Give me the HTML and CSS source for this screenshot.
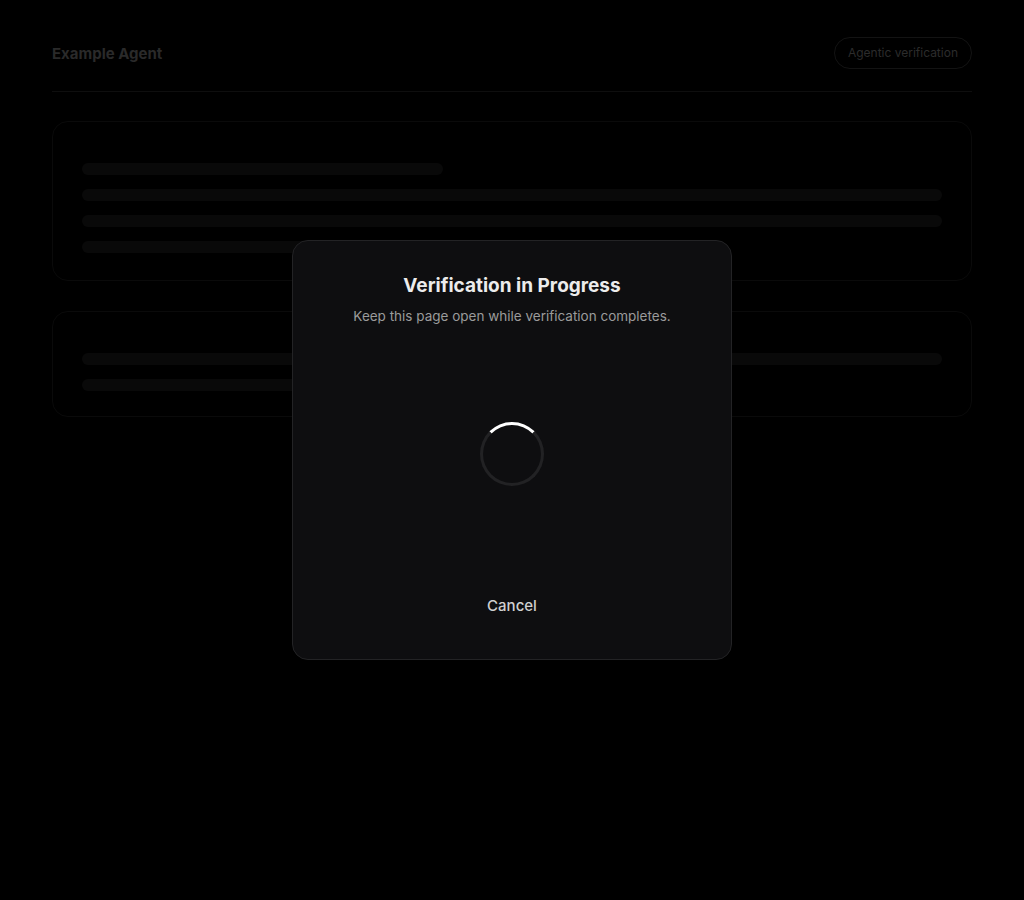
FILE: index.html
```html
<!DOCTYPE html>
<html lang="en">
<head>
    <meta charset="UTF-8">
    <meta name="viewport" content="width=device-width, initial-scale=1.0">
    <title>Example Agent</title>
    <link rel="stylesheet" href="styles.css">
</head>
<body>
    <div class="page">
        <header class="header">
            <h1 class="agent-name">Example Agent</h1>
            <span class="pill">Agentic verification</span>
        </header>

        <section class="card">
            <div class="skeleton w-40"></div>
            <div class="skeleton"></div>
            <div class="skeleton"></div>
            <div class="skeleton w-60"></div>
        </section>

        <section class="card card-short">
            <div class="skeleton"></div>
            <div class="skeleton w-60"></div>
        </section>
    </div>

    <div class="overlay">
        <div class="modal">
            <h2 class="modal-title">Verification in Progress</h2>
            <p class="modal-subtitle">Keep this page open while verification completes.</p>
            <div class="spinner-wrap">
                <div class="spinner"></div>
            </div>
            <button class="cancel-btn" type="button">Cancel</button>
        </div>
    </div>
</body>
</html>
```

FILE: styles.css
```css
* {
    margin: 0;
    padding: 0;
    box-sizing: border-box;
}

body {
    font-family: Inter, 'Noto Sans', 'Liberation Sans', sans-serif;
    background: #000;
    color: #e5e5e5;
    min-height: 100vh;
}

.page {
    max-width: 920px;
    margin: 0 auto;
    padding-top: 37px;
}

.header {
    display: flex;
    align-items: center;
    justify-content: space-between;
    padding-bottom: 22px;
    border-bottom: 1px solid #0e0e0e;
}

.agent-name {
    font-size: 15px;
    font-weight: 700;
    color: #2a2a2a;
}

.pill {
    font-size: 12px;
    color: #2c2c2c;
    border: 1px solid #131313;
    border-radius: 999px;
    padding: 7px 13px;
    line-height: 16px;
}

.card {
    margin-top: 29px;
    padding: 41px 29px 27px;
    border: 1px solid #0a0a0a;
    border-radius: 16px;
    display: flex;
    flex-direction: column;
    gap: 14px;
}

.card + .card {
    margin-top: 30px;
}

.card-short {
    padding-bottom: 25px;
}

.skeleton {
    height: 12px;
    border-radius: 6px;
    background: #090909;
}

.w-40 { width: 42%; }
.w-60 { width: 60%; }

.overlay {
    position: fixed;
    inset: 0;
    display: flex;
    align-items: center;
    justify-content: center;
}

.modal {
    width: 440px;
    height: 420px;
    background: #0e0e10;
    border: 1px solid #232325;
    border-radius: 16px;
    padding: 31px 32px 34px;
    display: flex;
    flex-direction: column;
    align-items: center;
    text-align: center;
}

.modal-title {
    font-size: 19px;
    line-height: 28px;
    font-weight: 700;
    color: #ececec;
}

.modal-subtitle {
    margin-top: 6px;
    font-size: 13.5px;
    line-height: 20px;
    color: #9b9b9b;
}

.spinner-wrap {
    flex: 1;
    display: flex;
    align-items: center;
    justify-content: center;
    padding-bottom: 4px;
}

.spinner {
    width: 64px;
    height: 64px;
    border-radius: 50%;
    border: 3px solid #222224;
    border-top-color: #fff;
}

.cancel-btn {
    font-family: inherit;
    font-size: 15px;
    font-weight: 500;
    color: #d0d0d0;
    background: none;
    border: none;
    height: 40px;
    padding: 0 16px;
    cursor: pointer;
}
```
